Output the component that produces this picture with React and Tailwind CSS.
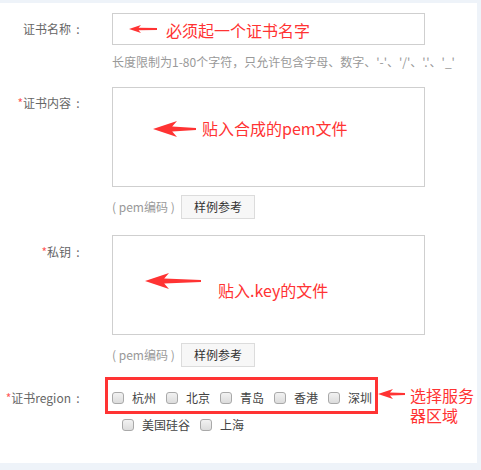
import React from 'react';

// Red hand-drawn style arrow pointing left
const Arrow = ({ w, h }) => (
  <svg width={w} height={h} viewBox={`0 0 ${w} ${h}`} className="block">
    <polygon
      points={`0,${h / 2} ${h * 1.5},0 ${h * 1.2},${h / 2 - h * 0.16} ${w},${h / 2 - 1} ${w},${h / 2 + 1} ${h * 1.2},${h / 2 + h * 0.16} ${h * 1.5},${h}`}
      fill="#ff3333"
    />
  </svg>
);

const Label = ({ required, children, className = '' }) => (
  <div className={`w-[85px] shrink-0 text-right text-[12px] leading-[16px] text-[#666] whitespace-nowrap ${className}`}>
    {required && <span className="text-[#ff5a5a]">*</span>}
    {children}
    <span className="inline-block w-[14px] text-center">:</span>
  </div>
);

const Checkbox = ({ label }) => (
  <label className="flex items-center gap-[8px]">
    <span className="block w-[12px] h-[12px] rounded-[3px] border border-[#a9a9a9] bg-gradient-to-b from-[#f2f2f2] to-[#dcdcdc]" />
    <span className="text-[12px] leading-[16px] text-[#444]">{label}</span>
  </label>
);

const PemRow = () => (
  <div className="flex items-center mt-[8px]">
    <span className="text-[12px] text-[#999] w-[69px] whitespace-nowrap">(&nbsp;pem编码&nbsp;)</span>
    <button className="h-[24px] px-[12px] border border-[#dcdcdc] bg-[#f7f7f7] text-[12px] text-[#333]">
      样例参考
    </button>
  </div>
);

export default function App() {
  return (
    <div
      className="w-[481px] h-[470px] bg-[#eef3f9] pt-[3px] overflow-hidden"
      style={{ fontFamily: '"Noto Sans CJK SC", "Noto Sans", sans-serif' }}
    >
      <div className="relative w-[477px] h-[460px] bg-white pt-[10px]">
        {/* 证书名称 */}
        <div className="flex gap-[27px]">
          <Label className="pt-[8px]">证书名称</Label>
          <div>
            <div className="relative w-[313px] h-[32px] border border-[#cfcfcf]">
              <div className="absolute left-[16px] top-[11px]">
                <Arrow w={28} h={8} />
              </div>
              <span className="absolute left-[53px] top-[6px] text-[16px] leading-[20px] text-[#ff3333]">
                必须起一个证书名字
              </span>
            </div>
            <div className="mt-[9px] text-[12px] leading-[16px] text-[#999] whitespace-nowrap">
              长度限制为1-80个字符，只允许包含字母、数字、'-'、'/'、'.'、'_'
            </div>
          </div>
        </div>

        {/* 证书内容 */}
        <div className="flex gap-[27px] mt-[17px]">
          <Label required className="pt-[8px]">证书内容</Label>
          <div>
            <div className="relative w-[313px] h-[100px] border border-[#cfcfcf]">
              <div className="absolute left-[40px] top-[33px]">
                <Arrow w={43} h={16} />
              </div>
              <span className="absolute left-[89px] top-[30px] text-[16px] leading-[20px] text-[#ff3333]">
                贴入合成的pem文件
              </span>
            </div>
            <PemRow />
          </div>
        </div>

        {/* 私钥 */}
        <div className="flex gap-[27px] mt-[16px]">
          <Label required className="pt-[9px]">私钥</Label>
          <div>
            <div className="relative w-[313px] h-[100px] border border-[#cfcfcf]">
              <div className="absolute left-[32px] top-[37px]">
                <Arrow w={56} h={16} />
              </div>
              <span className="absolute left-[105px] top-[44px] text-[16px] leading-[20px] text-[#ff3333]">
                贴入.key的文件
              </span>
            </div>
            <PemRow />
          </div>
        </div>

        {/* 证书region */}
        <div className="flex gap-[27px] mt-[21px]">
          <Label required className="pt-[2px]">证书region</Label>
          <div>
            <div className="flex items-center gap-[10px] h-[20px]">
              <Checkbox label="杭州" />
              <Checkbox label="北京" />
              <Checkbox label="青岛" />
              <Checkbox label="香港" />
              <Checkbox label="深圳" />
            </div>
            <div className="flex items-center gap-[10px] h-[20px] mt-[7px] pl-[10px]">
              <Checkbox label="美国硅谷" />
              <Checkbox label="上海" />
            </div>
          </div>
        </div>

        {/* annotation: region box */}
        <div className="absolute left-[105px] top-[374px] w-[273px] h-[37px] border-[3px] border-[#ff3333]" />
        <div className="absolute left-[378px] top-[386px]">
          <Arrow w={27} h={10} />
        </div>
        <div className="absolute left-[410px] top-[382px] text-[16px] leading-[20px] text-[#ff3333]">
          <div className="whitespace-nowrap">选择服务</div>
          <div className="whitespace-nowrap">器区域</div>
        </div>
      </div>
    </div>
  );
}
